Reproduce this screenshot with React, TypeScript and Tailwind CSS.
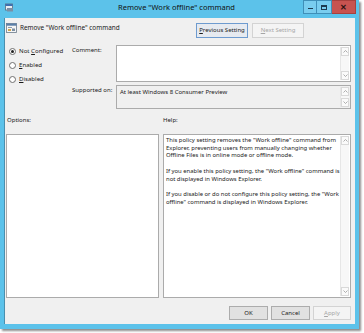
import React from 'react';

const ui = "font-['Noto_Sans',sans-serif]";

function ScrollBar({ className = '' }: { className?: string }) {
  return (
    <div className={`w-[9px] shrink-0 flex flex-col justify-between bg-[#f7f7f7] border-l border-[#e6e6e6] ${className}`}>
      <div className="h-[9px] flex items-center justify-center border border-[#d9d9d9] bg-[#fafafa]">
        <svg width="5" height="3" viewBox="0 0 5 3"><path d="M0.5 2.5 L2.5 0.5 L4.5 2.5" stroke="#9a9a9a" fill="none" strokeWidth="0.8" /></svg>
      </div>
      <div className="h-[9px] flex items-center justify-center border border-[#d9d9d9] bg-[#fafafa]">
        <svg width="5" height="3" viewBox="0 0 5 3"><path d="M0.5 0.5 L2.5 2.5 L4.5 0.5" stroke="#9a9a9a" fill="none" strokeWidth="0.8" /></svg>
      </div>
    </div>
  );
}

function Radio({ label, ul, rest, checked }: { label?: string; ul: string; rest: string; checked?: boolean }) {
  return (
    <div className="flex items-center h-[14px]">
      <div className="w-[7px] h-[7px] shrink-0 rounded-full border border-[#6f6f6f] bg-white flex items-center justify-center">
        {checked && <div className="w-[3px] h-[3px] rounded-full bg-[#222]" />}
      </div>
      <span className="ml-[3px] text-[6.1px] text-[#1a1a1a] whitespace-nowrap">
        {label}<span className="underline">{ul}</span>{rest}
      </span>
    </div>
  );
}

function Btn({ children, disabled, focus }: { children: React.ReactNode; disabled?: boolean; focus?: boolean }) {
  const cls = disabled
    ? 'bg-[#f4f4f4] border-[#d3d3d3] text-[#a6a6a6]'
    : focus
    ? 'bg-[#e6eaf0] border-[#6e9bcf] text-[#1a1a1a]'
    : 'bg-[#e1e1e1] border-[#acacac] text-[#1a1a1a]';
  return (
    <div className={`h-full flex items-center justify-center border text-[6px] whitespace-nowrap ${cls}`}>
      {children}
    </div>
  );
}

export default function App() {
  return (
    <div className={`w-[364px] h-[333px] bg-white ${ui}`}>
      <div className="w-[359px] h-[329px] bg-[#5cc2ea] flex flex-col px-[4px] pb-[5px] shadow-[2px_2px_2px_rgba(0,0,0,0.45)]">
        {/* title bar */}
        <div className="h-[18px] flex items-start">
          <div className="mt-[3px] ml-[1px]">
            <svg width="9" height="9" viewBox="0 0 9 9">
              <rect x="0.5" y="1" width="7" height="6" fill="#e8eef4" stroke="#5a6b7d" strokeWidth="0.8" />
              <rect x="0.5" y="1" width="7" height="2" fill="#3d6fb0" />
              <rect x="2" y="5" width="6" height="3.5" fill="#7b8fa5" />
            </svg>
          </div>
          <div className="flex-1 text-center text-[7.5px] text-[#111] leading-none pt-[4px] pl-[36px]">
            Remove "Work offline" command
          </div>
          <div className="flex h-[14px] mr-[-1px]">
            <div className="w-[14px] h-full border border-[#3f8fb8] bg-[#79cdef] flex items-center justify-center">
              <div className="w-[5px] h-[1.5px] bg-[#1d3a4f] mt-[3px]" />
            </div>
            <div className="w-[15px] h-full border border-l-0 border-[#3f8fb8] bg-[#79cdef] flex items-center justify-center">
              <div className="w-[6px] h-[5px] border border-t-2 border-[#1d3a4f]" />
            </div>
            <div className="w-[24px] h-full bg-[#c75350] border border-l-0 border-[#a8403d] flex items-center justify-center text-[8px] font-bold text-[#2a1212] leading-none">
              ✕
            </div>
          </div>
        </div>

        {/* body */}
        <div className="flex-1 bg-[#f0f0f0] border-l border-[#4a8fae] flex flex-col pr-[4px]">
          {/* header row */}
          <div className="h-[15px] mt-[5px] flex">
            <div className="w-[191px] flex items-start pl-[1px]">
              <svg width="11" height="10" viewBox="0 0 11 10">
                <rect x="0.5" y="0.5" width="10" height="9" fill="#f5f5f5" stroke="#6a7a8a" strokeWidth="0.8" />
                <rect x="0.5" y="0.5" width="10" height="2.2" fill="#5b7fa8" />
                <rect x="2" y="4" width="4" height="1" fill="#8a9aaa" />
                <rect x="2" y="6" width="3" height="2" fill="#d0a64a" />
                <rect x="6" y="5.5" width="3" height="2.5" fill="#7d8fa3" />
              </svg>
              <span className="ml-[3px] text-[6.4px] text-[#1a1a1a] leading-[10px] whitespace-nowrap">Remove "Work offline" command</span>
            </div>
            <div className="w-[52px] h-full">
              <Btn focus><span className="underline">P</span>revious Setting</Btn>
            </div>
            <div className="w-[52px] h-full ml-[4px]">
              <Btn disabled><span className="underline">N</span>ext Setting</Btn>
            </div>
          </div>

          {/* settings */}
          <div className="flex mt-[7px]">
            <div className="w-[67px] shrink-0 pl-[4px] flex flex-col -mt-[1px]">
              <Radio label="Not " ul="C" rest="onfigured" checked />
              <Radio ul="E" rest="nabled" />
              <Radio ul="D" rest="isabled" />
            </div>
            <div className="flex-1 grid grid-cols-[44px_1fr] gap-y-[3px]">
              <div className="text-[6px] text-[#1a1a1a] pt-[1px]">Comment:</div>
              <div className="h-[37px] bg-white border border-[#ababab] flex justify-end p-[1px]">
                <ScrollBar />
              </div>
              <div className="text-[6px] text-[#1a1a1a] pt-[1px] whitespace-nowrap">Supported on:</div>
              <div className="h-[24px] bg-[#f0f0f0] border border-[#ababab] flex p-[1px]">
                <div className="flex-1 text-[6px] text-[#1a1a1a] pl-[2px] pt-[1px] whitespace-nowrap">At least Windows 8 Consumer Preview</div>
                <ScrollBar />
              </div>
            </div>
          </div>

          {/* labels */}
          <div className="flex mt-[7px] h-[11px] text-[6px] text-[#1a1a1a]">
            <div className="w-[158px] shrink-0 pl-[2px]">Options:</div>
            <div>Help:</div>
          </div>

          {/* panes */}
          <div className="flex mt-[7px] h-[164px] pl-[1px] gap-[4px]">
            <div className="w-[153px] shrink-0 h-full bg-white border border-[#ababab]" />
            <div className="flex-1 min-w-0 h-full bg-white border border-[#ababab] flex p-[1px]">
              <div className="flex-1 min-w-0 overflow-hidden pl-[1px] pt-[1px] text-[5.9px] leading-[7.7px] text-[#1a1a1a] whitespace-nowrap">
                <p>This policy setting removes the "Work offline" command from</p>
                <p>Explorer, preventing users from manually changing whether</p>
                <p>Offline Files is in online mode or offline mode.</p>
                <p className="mt-[7.7px]">If you enable this policy setting, the "Work offline" command is</p>
                <p>not displayed in Windows Explorer.</p>
                <p className="mt-[7.7px]">If you disable or do not configure this policy setting, the "Work</p>
                <p>offline" command is displayed in Windows Explorer.</p>
              </div>
              <ScrollBar />
            </div>
          </div>

          {/* footer */}
          <div className="flex justify-end mt-[8px] h-[14px] gap-[3px]">
            <div className="w-[39px] h-full"><Btn>OK</Btn></div>
            <div className="w-[39px] h-full"><Btn>Cancel</Btn></div>
            <div className="w-[38px] h-full"><Btn disabled><span className="underline">A</span>pply</Btn></div>
          </div>
        </div>
      </div>
    </div>
  );
}
